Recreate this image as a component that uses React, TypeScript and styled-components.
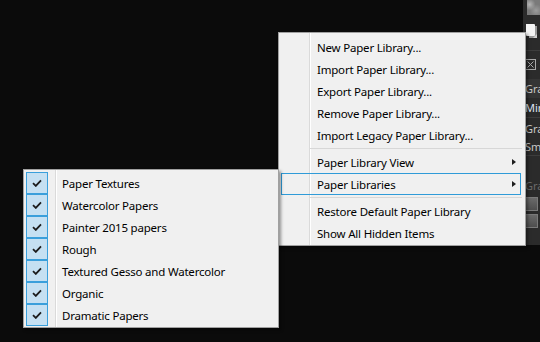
import React from "react";
import styled, { createGlobalStyle } from "styled-components";

const GlobalStyle = createGlobalStyle`
  html, body { margin: 0; padding: 0; background: #0b0b0b; }
  body { font-family: "Segoe UI", "Noto Sans", "Open Sans", sans-serif; }
  #root { width: 540px; height: 342px; }
`;

const Page = styled.div`
  position: relative;
  width: 540px;
  height: 342px;
  display: flex;
  align-items: flex-start;
  background: #0b0b0b;
  overflow: hidden;
`;

const Workspace = styled.div`
  flex: 1;
`;

const SidePanel = styled.aside`
  width: 17px;
  height: 245px;
  background: #2b2b2b;
  display: flex;
  flex-direction: column;
  overflow: hidden;
  font-family: "Segoe UI", "Noto Sans", sans-serif;
  font-size: 11px;
`;

const Thumb = styled.div`
  height: 15px;
  margin-left: 4px;
  flex: none;
  background:
    radial-gradient(circle at 20% 30%, #b5b5b5 0, transparent 40%),
    radial-gradient(circle at 70% 70%, #9c9c9c 0, transparent 45%),
    #7a7a7a;
`;

const IconRow = styled.div<{ $h: number }>`
  height: ${(p) => p.$h}px;
  flex: none;
  display: flex;
  align-items: center;
  padding-left: 2px;
`;

const Rule = styled.div`
  height: 1px;
  flex: none;
  background: #3d3d3d;
`;

const PanelText = styled.div<{ $h: number; $dim?: boolean; $band?: boolean; $tone?: string }>`
  height: ${(p) => p.$h}px;
  flex: none;
  display: flex;
  align-items: center;
  padding-left: 2px;
  white-space: nowrap;
  color: ${(p) => (p.$dim ? "#6a6a6a" : p.$tone || "#c8c8c8")};
  background: ${(p) => (p.$band ? "#353535" : "transparent")};
`;

const PanelButton = styled.div`
  height: 12px;
  width: 11px;
  margin: 0 0 3px 2px;
  flex: none;
  background: linear-gradient(#6a6a6a, #4e4e4e);
  border: 1px solid #7a7a7a;
`;

const Gap = styled.div<{ $h: number }>`
  height: ${(p) => p.$h}px;
  flex: none;
`;

const Menu = styled.div<{ $left: number; $top: number; $width: number; $gutter: number; $pad: string; $z: number }>`
  position: absolute;
  left: ${(p) => p.$left}px;
  top: ${(p) => p.$top}px;
  width: ${(p) => p.$width}px;
  z-index: ${(p) => p.$z};
  box-sizing: border-box;
  border: 1px solid #a0a0a0;
  padding: ${(p) => p.$pad};
  background:
    linear-gradient(
      to right,
      transparent ${(p) => p.$gutter}px,
      #dadada ${(p) => p.$gutter}px,
      #dadada ${(p) => p.$gutter + 1}px,
      #ffffff ${(p) => p.$gutter + 1}px,
      #ffffff ${(p) => p.$gutter + 2}px,
      transparent ${(p) => p.$gutter + 2}px
    ),
    #f0f0f0;
  box-shadow: 2px 2px 3px rgba(0, 0, 0, 0.4);
  font-family: "Segoe UI", "Noto Sans", "Open Sans", sans-serif;
  font-size: 11.5px;
  letter-spacing: -0.2px;
  color: #000;
`;

const Item = styled.div<{ $active?: boolean }>`
  display: flex;
  align-items: center;
  height: 22px;
  margin: 0 4px 0 2px;
  box-shadow: ${(p) => (p.$active ? "inset 0 0 0 1px #2f9bd8" : "none")};
  white-space: nowrap;
`;

const CheckCell = styled.span<{ $checked?: boolean }>`
  width: 22px;
  height: 22px;
  flex: none;
  box-sizing: border-box;
  display: flex;
  align-items: center;
  justify-content: center;
  border: 1px solid ${(p) => (p.$checked ? "#3a9fdb" : "transparent")};
  background: ${(p) => (p.$checked ? "#c5e0f2" : "transparent")};
`;

const Label = styled.span`
  flex: 1;
  padding-left: 14px;
  line-height: 22px;
  padding-top: 1px;
`;

const Arrow = styled.span`
  width: 0;
  height: 0;
  margin-right: 5px;
  border-style: solid;
  border-width: 3.5px 0 3.5px 4px;
  border-color: transparent transparent transparent #1e1e1e;
`;

const Separator = styled.div`
  height: 1px;
  margin: 2px 3px 2px 31px;
  background: #d7d7d7;
`;

const Check = () => (
  <svg width="10" height="8" viewBox="0 0 10 8">
    <path d="M1 4.2 L3.8 6.9 L9 1.3" stroke="#1c1c1c" strokeWidth="1.8" fill="none" />
  </svg>
);

const DocIcon = () => (
  <svg width="13" height="16" viewBox="0 0 13 16">
    <path d="M4 3 H12 V15 H4 Z" fill="#9a9a9a" />
    <path d="M1 1 H9 Q10 1 10 2 V12 Q10 13 9 13 H2 Q1 13 1 12 Z" fill="#f4f4f4" />
    <path d="M8 15 L12 11 V15 Z" fill="#d0d0d0" />
  </svg>
);

const CloseBox = () => (
  <svg width="11" height="11" viewBox="0 0 11 11">
    <rect x="0.5" y="0.5" width="10" height="10" fill="none" stroke="#a8a8a8" />
    <path d="M2.5 2.5 L8.5 8.5 M8.5 2.5 L2.5 8.5" stroke="#a8a8a8" strokeWidth="1" />
  </svg>
);

type Entry = { label?: string; sep?: boolean; sub?: boolean; active?: boolean };

const mainEntries: Entry[] = [
  { label: "New Paper Library..." },
  { label: "Import Paper Library..." },
  { label: "Export Paper Library..." },
  { label: "Remove Paper Library..." },
  { label: "Import Legacy Paper Library..." },
  { sep: true },
  { label: "Paper Library View", sub: true },
  { label: "Paper Libraries", sub: true, active: true },
  { sep: true },
  { label: "Restore Default Paper Library" },
  { label: "Show All Hidden Items" },
];

const libraries = [
  "Paper Textures",
  "Watercolor Papers",
  "Painter 2015 papers",
  "Rough",
  "Textured Gesso and Watercolor",
  "Organic",
  "Dramatic Papers",
];

export default function App() {
  return (
    <Page>
      <GlobalStyle />
      <Workspace />
      <SidePanel>
        <Thumb />
        <IconRow $h={31}>
          <DocIcon />
        </IconRow>
        <Gap $h={4} />
        <Rule />
        <IconRow $h={26}>
          <CloseBox />
        </IconRow>
        <Gap $h={2} />
        <PanelText $h={19} $band>Gra</PanelText>
        <PanelText $h={19} $tone="#dfe6f5">Min</PanelText>
        <Rule />
        <PanelText $h={20}>Gra</PanelText>
        <PanelText $h={17}>Sme</PanelText>
        <Rule />
        <Gap $h={20} />
        <PanelText $h={19} $dim>Gra</PanelText>
        <Gap $h={2} />
        <PanelButton />
        <PanelButton />
      </SidePanel>

      <Menu $left={278} $top={32} $width={248} $gutter={30} $pad="3px 0 1px" $z={1}>
        {mainEntries.map((e, i) =>
          e.sep ? (
            <Separator key={i} />
          ) : (
            <Item key={i} $active={e.active}>
              <CheckCell />
              <Label>{e.label}</Label>
              {e.sub && <Arrow />}
            </Item>
          )
        )}
      </Menu>

      <Menu $left={23} $top={169} $width={256} $gutter={31} $pad="2px 0 1px" $z={2}>
        {libraries.map((l) => (
          <Item key={l}>
            <CheckCell $checked>
              <Check />
            </CheckCell>
            <Label>{l}</Label>
          </Item>
        ))}
      </Menu>
    </Page>
  );
}
